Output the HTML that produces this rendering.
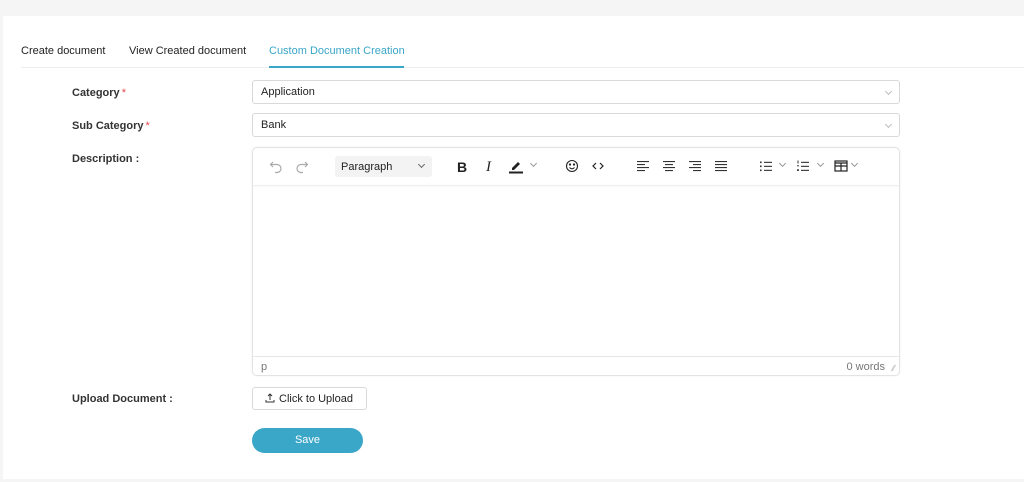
<!DOCTYPE html>
<html><head><style>
*{box-sizing:border-box;margin:0;padding:0}
body{width:1024px;height:482px;background:#f5f5f5;font-family:"Liberation Sans",Arial,sans-serif;font-size:11px;color:#222;position:relative;overflow:hidden}
.card{position:absolute;left:3px;top:16px;width:1021px;height:463px;background:#fff}
.abs{position:absolute}
.tab{position:absolute;top:45px;font-size:11px;color:#222}
.lbl{position:absolute;left:72px;font-size:11px;font-weight:bold;color:#333}
.req{color:#e5484d;font-weight:normal;margin-left:2px}
.sel{position:absolute;left:252px;width:648px;height:24px;border:1px solid #d9d9d9;border-radius:3px;padding:0 8px;line-height:23px;font-size:11px}
.chev{position:absolute;right:8px;top:8px;width:5px;height:5px;border-right:1px solid #bbb;border-bottom:1px solid #bbb;transform:rotate(45deg)}
.ed{position:absolute;left:252px;top:147px;width:648px;height:229px;border:1px solid #e3e3e3;border-radius:5px;box-shadow:0 0 2px #eee}
.ic{position:absolute;top:158px}
svg{display:block}
</style></head><body>
<div class="card"></div>
<div class="tab" style="left:21px">Create document</div>
<div class="tab" style="left:129px">View Created document</div>
<div class="tab" style="left:269px;color:#3aa6c8">Custom Document Creation</div>
<div class="abs" style="left:21px;top:67px;width:1003px;height:1px;background:#eee"></div>
<div class="abs" style="left:269px;top:66px;width:135px;height:2px;background:#3aa6c8"></div>

<div class="lbl" style="top:87px">Category<span class="req">*</span></div>
<div class="lbl" style="top:120px">Sub Category<span class="req">*</span></div>
<div class="lbl" style="top:153px">Description :</div>
<div class="lbl" style="top:393px">Upload Document :</div>

<div class="sel" style="top:80px">Application<span class="chev"></span></div>
<div class="sel" style="top:113px">Bank<span class="chev"></span></div>

<div class="ed">
  <div class="abs" style="left:0;right:0;top:37px;height:1px;background:#eee;box-shadow:0 1px 2px #f0f0f0"></div>
  <div class="abs" style="left:0;right:0;top:208px;height:1px;background:#e6e6e6"></div>
  <div class="abs" style="left:8px;top:213px;color:#777;font-size:11px">p</div>
  <div class="abs" style="right:14px;top:213px;color:#777;font-size:11px">0 words</div>
  <div class="abs" style="right:4px;top:216px;color:#aaa;font-size:8px">⁄⁄</div>
  <div class="abs" style="left:82px;top:8px;width:97px;height:21px;background:#f3f3f3;border-radius:3px;padding-left:6px;line-height:22px;font-size:11px">Paragraph<span class="chev" style="top:6px;right:8px;border-color:#666"></span></div>
</div>

<svg class="ic" style="left:268px" width="16" height="16" viewBox="0 0 16 16" fill="none" stroke="#aaa" stroke-width="1.2"><path d="M5 4L2.5 6.5 5 9M3 6.5h6a4 4 0 0 1 0 8H7"/></svg>
<svg class="ic" style="left:294px" width="16" height="16" viewBox="0 0 16 16" fill="none" stroke="#aaa" stroke-width="1.2"><path d="M11 4l2.5 2.5L11 9M13 6.5H7a4 4 0 0 0 0 8h2"/></svg>
<div class="abs" style="left:457px;top:159px;font-weight:bold;font-size:14px">B</div>
<div class="abs" style="left:486px;top:159px;font-style:italic;font-family:'Liberation Serif',serif;font-size:15px">I</div>
<svg class="ic" style="left:508px" width="16" height="16" viewBox="0 0 16 16"><path d="M4 10l6-6 2 2-6 6H4z" fill="#222"/><rect x="1" y="13.5" width="14" height="2" fill="#222"/></svg>
<span class="chev abs" style="left:531px;top:161px;right:auto;border-color:#999"></span>
<svg class="ic" style="left:564px" width="16" height="16" viewBox="0 0 16 16" fill="none" stroke="#222" stroke-width="1.1"><circle cx="8" cy="8" r="5.5"/><path d="M5.5 9.5q2.5 2.5 5 0"/><circle cx="6" cy="6.5" r=".6" fill="#222"/><circle cx="10" cy="6.5" r=".6" fill="#222"/></svg>
<svg class="ic" style="left:590px" width="16" height="16" viewBox="0 0 16 16" fill="none" stroke="#222" stroke-width="1.2"><path d="M6 5L3 8 6 11M10 5L13 8 10 11"/></svg>
<svg class="ic" style="left:635px" width="16" height="16" viewBox="0 0 16 16" fill="#333"><rect x="2" y="3" width="12" height="1.1"/><rect x="2" y="6" width="8" height="1.1"/><rect x="2" y="9" width="12" height="1.1"/><rect x="2" y="12" width="8" height="1.1"/></svg>
<svg class="ic" style="left:661px" width="16" height="16" viewBox="0 0 16 16" fill="#333"><rect x="2" y="3" width="12" height="1.1"/><rect x="4" y="6" width="8" height="1.1"/><rect x="2" y="9" width="12" height="1.1"/><rect x="4" y="12" width="8" height="1.1"/></svg>
<svg class="ic" style="left:687px" width="16" height="16" viewBox="0 0 16 16" fill="#333"><rect x="2" y="3" width="12" height="1.1"/><rect x="6" y="6" width="8" height="1.1"/><rect x="2" y="9" width="12" height="1.1"/><rect x="6" y="12" width="8" height="1.1"/></svg>
<svg class="ic" style="left:713px" width="16" height="16" viewBox="0 0 16 16" fill="#333"><rect x="2" y="3" width="12" height="1.1"/><rect x="2" y="6" width="12" height="1.1"/><rect x="2" y="9" width="12" height="1.1"/><rect x="2" y="12" width="12" height="1.1"/></svg>
<svg class="ic" style="left:758px" width="16" height="16" viewBox="0 0 16 16" fill="#333"><rect x="2" y="3.5" width="1.6" height="1.6"/><rect x="6" y="3.8" width="8" height="1.1"/><rect x="2" y="7.5" width="1.6" height="1.6"/><rect x="6" y="7.8" width="8" height="1.1"/><rect x="2" y="11.5" width="1.6" height="1.6"/><rect x="6" y="11.8" width="8" height="1.1"/></svg>
<span class="chev abs" style="left:780px;top:161px;right:auto;border-color:#999"></span>
<svg class="ic" style="left:795px" width="16" height="16" viewBox="0 0 16 16" fill="#333"><rect x="2.5" y="2.5" width="1" height="3"/><rect x="2" y="7.3" width="2" height="1"/><rect x="2" y="11.3" width="2" height="1.6"/><rect x="6" y="3.8" width="8" height="1.1"/><rect x="6" y="7.8" width="8" height="1.1"/><rect x="6" y="11.8" width="8" height="1.1"/></svg>
<span class="chev abs" style="left:818px;top:161px;right:auto;border-color:#999"></span>
<svg class="ic" style="left:833px" width="16" height="16" viewBox="0 0 16 16" fill="none" stroke="#222" stroke-width="1.2"><rect x="2" y="3" width="12" height="10"/><path d="M2 8h12M8 5v8M2 5h12" /></svg>
<span class="chev abs" style="left:852px;top:161px;right:auto;border-color:#999"></span>

<div class="abs" style="left:252px;top:387px;width:115px;height:23px;border:1px solid #d9d9d9;border-radius:3px;line-height:22px;padding-left:12px;font-size:11px">
<svg style="display:inline-block;vertical-align:-1px;margin-right:4px" width="10" height="10" viewBox="0 0 10 10" fill="none" stroke="#333" stroke-width="1"><path d="M5 7V1M3 3l2-2 2 2M1 7v2h8V7"/></svg>Click to Upload</div>
<div class="abs" style="left:252px;top:428px;width:111px;height:25px;background:#3aa6c8;border-radius:13px;color:#fff;text-align:center;line-height:25px;font-size:11px">Save</div>
</body></html>
